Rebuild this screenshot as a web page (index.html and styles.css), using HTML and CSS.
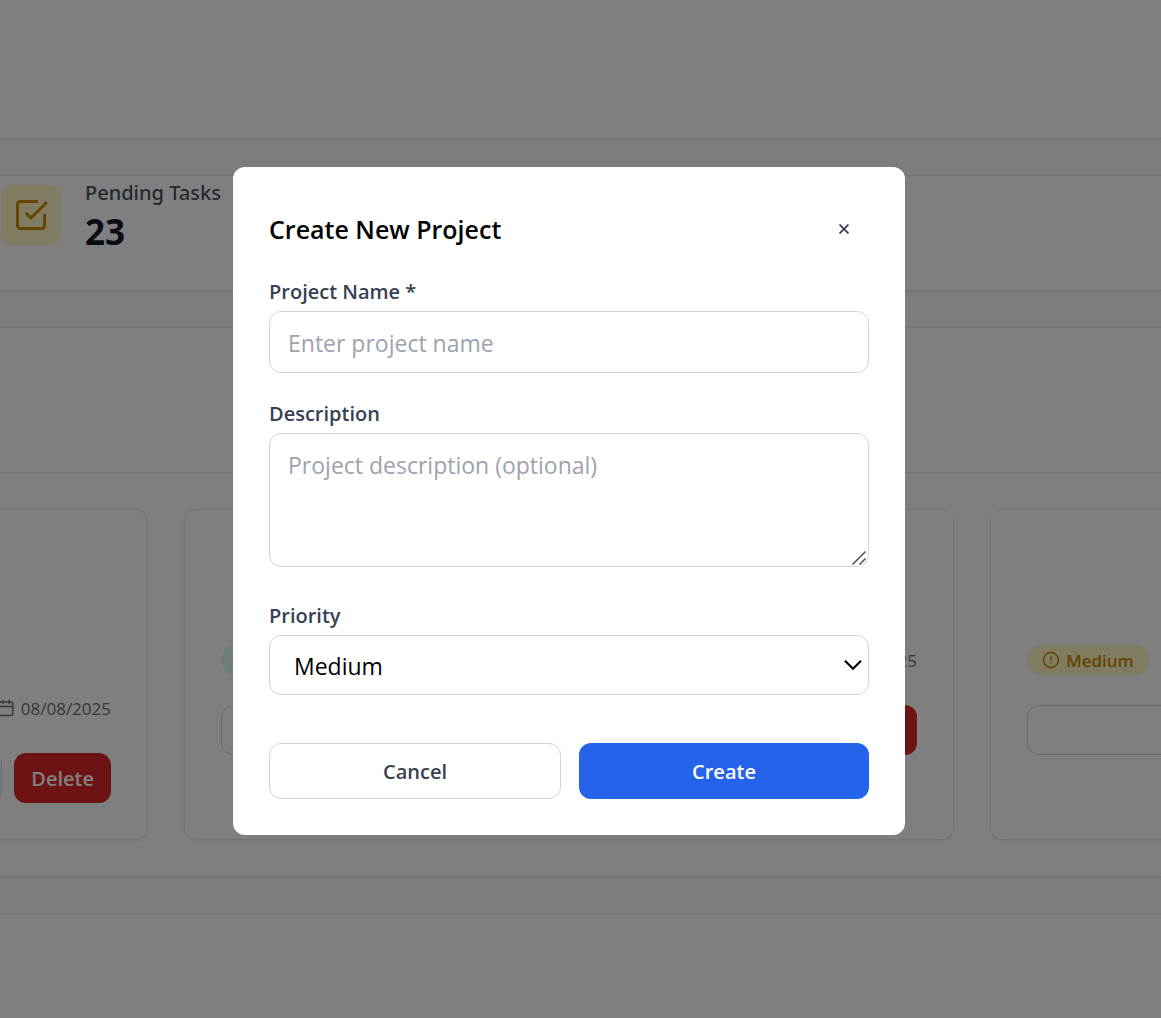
FILE: index.html
```html
<!DOCTYPE html>
<html lang="en">
<head>
  <meta charset="utf-8">
  <meta name="viewport" content="width=device-width, initial-scale=1">
  <title>Projects</title>
  <link rel="stylesheet" href="styles.css">
</head>
<body>
  <main class="page">
    <section class="panel panel-top"></section>

    <section class="panel stats">
      <div class="stat-icon">
        <svg width="36" height="36" viewBox="0 0 24 24" fill="none" stroke="currentColor" stroke-width="2" stroke-linecap="round" stroke-linejoin="round" aria-hidden="true"><path d="M21 12v7a2 2 0 0 1-2 2H5a2 2 0 0 1-2-2V5a2 2 0 0 1 2-2h11"/><path d="m9 11 3 3L22 4"/></svg>
      </div>
      <div>
        <div class="stat-label">Pending Tasks</div>
        <div class="stat-value">23</div>
      </div>
    </section>

    <section class="panel projects">
      <header class="projects-head"></header>
      <div class="project-grid">
        <article class="project">
          <div class="project-info"></div>
          <div class="project-meta">
            <span class="date">
              <svg width="18" height="18" viewBox="0 0 24 24" fill="none" stroke="currentColor" stroke-width="2" stroke-linecap="round" stroke-linejoin="round" aria-hidden="true"><path d="M8 2v4M16 2v4M3 10h18"/><rect x="3" y="4" width="18" height="18" rx="2"/></svg>
              08/08/2025
            </span>
          </div>
          <div class="project-actions">
            <button class="btn btn-outline" type="button" aria-label="View"></button>
            <button class="btn btn-danger" type="button">Delete</button>
          </div>
        </article>

        <article class="project">
          <div class="project-info short"></div>
          <div class="project-meta">
            <span class="badge badge-low">Low</span>
            <span class="date">08/08/2025</span>
          </div>
          <div class="project-actions">
            <button class="btn btn-outline" type="button" aria-label="View"></button>
            <button class="btn btn-danger" type="button">Delete</button>
          </div>
        </article>

        <article class="project">
          <div class="project-info short"></div>
          <div class="project-meta">
            <span class="badge badge-medium">
              <svg width="18" height="18" viewBox="0 0 24 24" fill="none" stroke="currentColor" stroke-width="2" stroke-linecap="round" stroke-linejoin="round" aria-hidden="true"><circle cx="12" cy="12" r="10"/><path d="M12 8v4M12 16h.01"/></svg>
              Medium
            </span>
          </div>
          <div class="project-actions">
            <button class="btn btn-outline" type="button" aria-label="View"></button>
          </div>
        </article>
      </div>
    </section>

    <section class="panel panel-last"></section>
  </main>

  <div class="overlay">
    <form class="modal" role="dialog" aria-modal="true" aria-labelledby="modal-title">
      <header class="modal-head">
        <h2 class="modal-title" id="modal-title">Create New Project</h2>
        <button class="close" type="button" aria-label="Close">
          <svg width="10" height="10" viewBox="0 0 9 9" fill="none" stroke="currentColor" stroke-width="1.600" aria-hidden="true"><path d="M.5.5l8 8M8.500.5l-8 8"/></svg>
        </button>
      </header>

      <div class="field">
        <label class="label" for="name">Project Name *</label>
        <input class="control" id="name" type="text" placeholder="Enter project name">
      </div>

      <div class="field field-area">
        <label class="label" for="description">Description</label>
        <div class="control-wrap">
          <textarea class="control area" id="description" placeholder="Project description (optional)"></textarea>
          <svg class="grip" width="16" height="16" viewBox="0 0 16 16" fill="none" stroke="#555" stroke-width="1.600" aria-hidden="true"><path d="M1.500 14.500l13-13M8.500 14.500l6-6"/></svg>
        </div>
      </div>

      <div class="field">
        <label class="label" for="priority">Priority</label>
        <div class="control-wrap">
          <select class="control select" id="priority">
            <option>Low</option>
            <option selected>Medium</option>
            <option>High</option>
          </select>
          <svg class="chevron" width="18" height="12" viewBox="0 0 18 12" fill="none" stroke="#000" stroke-width="2.200" aria-hidden="true"><path d="M1 1.800l8 8 8-8"/></svg>
        </div>
      </div>

      <div class="modal-actions">
        <button class="modal-btn" type="button">Cancel</button>
        <button class="modal-btn primary" type="submit">Create</button>
      </div>
    </form>
  </div>
</body>
</html>
```
FILE: styles.css
```css
*,
*::before,
*::after {
  box-sizing: border-box;
}

body {
  margin: 0;
  overflow: hidden;
  background: #f8fcfa;
  color: #111827;
  font-family: "Segoe UI", "Open Sans", "Noto Sans", sans-serif;
}

button,
input,
select,
textarea {
  font: inherit;
}

svg {
  display: block;
  flex: none;
}

.page {
  display: flex;
  flex-direction: column;
  gap: 36px;
  min-height: 100vh;
}

.panel {
  background: #fff;
  border: solid #e5e7eb;
  border-width: 1px 0;
  box-shadow: 0 1px 3px rgba(0, 0, 0, 0.06);
}

.panel-top {
  min-height: 139px;
  border-top: 0;
}

.panel-last {
  flex: 1;
  min-height: 105px;
  border-bottom: 0;
}

.stats {
  display: flex;
  align-items: center;
  gap: 24px;
  padding: 0 1px 36px;
}

.stat-icon {
  display: grid;
  place-items: center;
  width: 60px;
  height: 60px;
  border-radius: 12px;
  background: #fef9c3;
  color: #ca8a04;
}

.stat-label {
  color: #4b5563;
  font-family: "Segoe UI", "Noto Sans", sans-serif;
  font-size: 20px;
  font-weight: 500;
  line-height: 34px;
}

.stat-value {
  font-size: 35px;
  font-weight: 700;
  line-height: 44px;
}

.projects-head {
  height: 145px;
  border-bottom: 1px solid #e5e7eb;
}

.project-grid {
  display: grid;
  grid-template-columns: repeat(3, 770px);
  justify-content: center;
  gap: 36px;
  padding: 36px 23px 36px 0;
}

.project {
  padding: 36px;
  border: 1px solid #e5e7eb;
  border-radius: 12px;
  box-shadow: 0 1px 3px rgba(0, 0, 0, 0.08);
}

.project-info {
  height: 147px;
}

.project-info.short {
  height: 99px;
}

.project-meta {
  display: flex;
  align-items: center;
  height: 30px;
  margin-bottom: 30px;
}

.date {
  display: flex;
  align-items: center;
  gap: 6px;
  margin-left: auto;
  color: #6b7280;
  font-size: 17px;
}

.badge {
  display: flex;
  align-items: center;
  gap: 6px;
  height: 30px;
  padding: 0 15px;
  border-radius: 15px;
  font-size: 17px;
  font-weight: 600;
}

.badge-low {
  background: #dcfce7;
  color: #16a34a;
}

.badge-medium {
  background: #fef9c3;
  color: #ca8a04;
}

.project-actions {
  display: flex;
  gap: 12px;
}

.btn {
  height: 50px;
  padding: 0 17px;
  border: 1px solid #d1d5db;
  border-radius: 12px;
  background: #fff;
  color: #374151;
  font-size: 20px;
  font-weight: 600;
}

.btn-outline {
  flex: 1;
}

.btn-danger {
  border: 0;
  background: #dc2626;
  color: #fff;
}

.overlay {
  position: fixed;
  inset: 0;
  display: flex;
  align-items: center;
  justify-content: center;
  padding: 0 23px 16px 0;
  background: rgba(0, 0, 0, 0.5);
}

.modal {
  width: 100%;
  max-width: 672px;
  padding: 36px;
  border-radius: 12px;
  background: #fff;
}

.modal-head {
  display: flex;
  align-items: center;
  justify-content: space-between;
  margin-bottom: 24px;
}

.modal-title {
  margin: 0;
  color: #000;
  font-size: 25px;
  font-weight: 600;
}

.close {
  display: grid;
  place-items: center;
  width: 51px;
  height: 51px;
  padding: 0;
  border: 0;
  border-radius: 12px;
  background: none;
  color: #374151;
}

.field {
  margin-bottom: 27px;
}

.field-area {
  margin-bottom: 35px;
}

.label {
  display: block;
  margin-bottom: 6px;
  color: #374151;
  font-size: 20px;
  font-weight: 600;
  line-height: 27px;
}

.control-wrap {
  position: relative;
}

.control {
  display: block;
  width: 100%;
  height: 62px;
  padding: 13px 18px 11px;
  border: 1px solid #d1d5db;
  border-radius: 12px;
  background: #fff;
  color: #000;
  font-size: 23px;
  line-height: 36px;
}

.control::placeholder {
  color: #9ca3af;
  opacity: 1;
}

.area {
  height: 134px;
  resize: none;
}

.select {
  height: 60px;
  padding: 2px 24px 0;
  appearance: none;
}

.grip {
  position: absolute;
  right: 2px;
  bottom: 1px;
}

.chevron {
  position: absolute;
  top: 24px;
  right: 7px;
  pointer-events: none;
}

.modal-actions {
  display: flex;
  gap: 18px;
  margin-top: 48px;
}

.modal-btn {
  flex: 1;
  height: 56px;
  border: 1px solid #d1d5db;
  border-radius: 12px;
  background: #fff;
  color: #374151;
  font-size: 20px;
  font-weight: 600;
}

.modal-btn.primary {
  border: 0;
  background: #2563eb;
  color: #fff;
}
```
